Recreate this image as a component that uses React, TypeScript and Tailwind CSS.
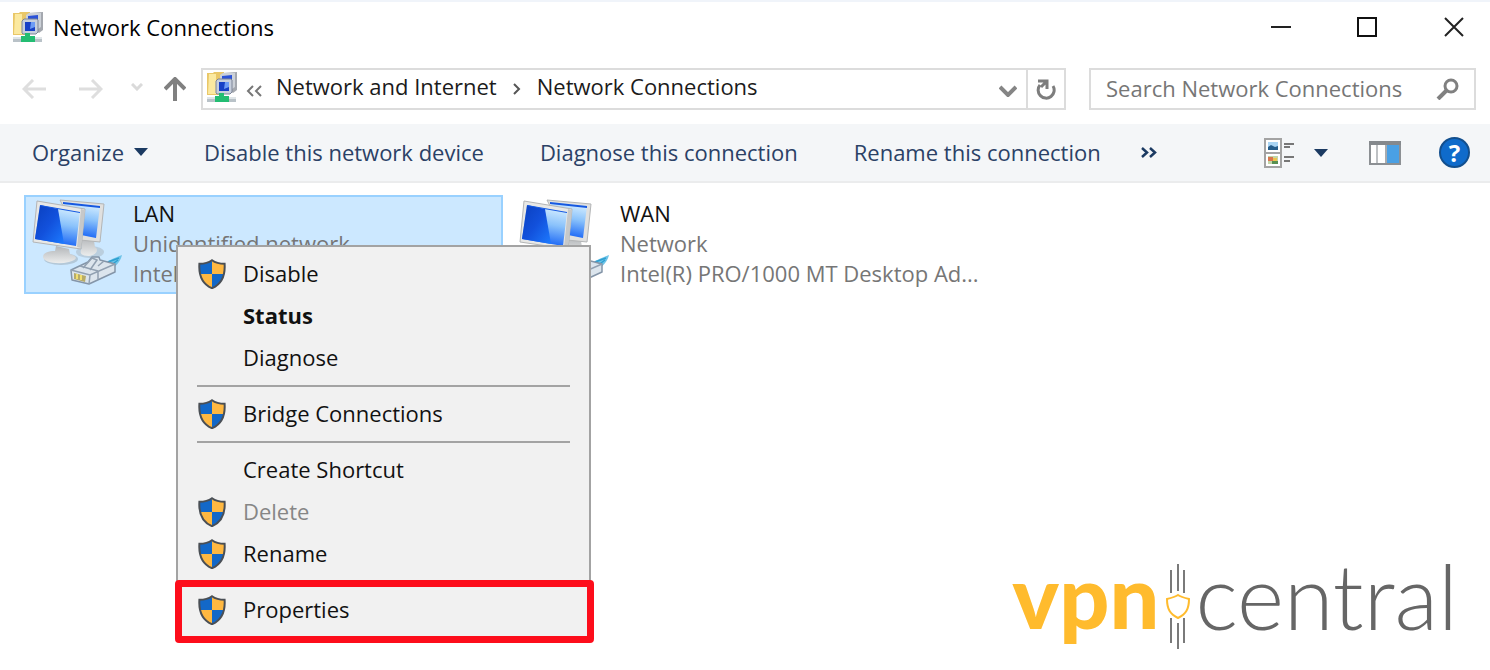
import type { ReactNode } from 'react';

const menuGroups = [
    [
        { label: 'Disable', shield: true },
        { label: 'Status', bold: true },
        { label: 'Diagnose' },
    ],
    [{ label: 'Bridge Connections', shield: true }],
    [
        { label: 'Create Shortcut' },
        { label: 'Delete', shield: true, disabled: true },
        { label: 'Rename', shield: true },
    ],
    [{ label: 'Properties', shield: true, highlighted: true }],
] as { label: string; shield?: boolean; bold?: boolean; disabled?: boolean; highlighted?: boolean }[][];

const connections = [
    { id: 'lan', name: 'LAN', status: 'Unidentified network', device: 'Intel(R) PRO/1000 MT Desktop Ad...', selected: true },
    { id: 'wan', name: 'WAN', status: 'Network', device: 'Intel(R) PRO/1000 MT Desktop Ad...', selected: false },
];

function FolderIcon() {
    return (
        <svg viewBox="0 0 31 31" className="h-[31px] w-[31px] shrink-0" aria-hidden="true">
            <path d="M0 1h6l1-1h10v23H0z" fill="#e9c768" />
            <path d="M2 2h7v20H1z" fill="#fbe9a0" />
            <path d="M15 1l15-1v18l-4 3-3-2z" fill="#a4a8af" />
            <path d="M13 3l3-2h12v14l-3 2-2-9H13z" fill="#ccd1d8" />
            <path d="M15 4l10-1v12h-1V8h-9z" fill="#2b52d8" />
            <path d="M9 9l2-2h13l1 1v12l-2 2H10l-1-1z" fill="#c7cfdd" stroke="#7d8597" />
            <path d="M12 10h10v9H12z" fill="#1740c6" />
            <path d="M18 10h4v5l-5 2z" fill="#6e9cf5" />
            <path d="M0 25h29v5H0z" fill="#b9c2c8" />
            <path d="M0 25h29v2H0z" fill="#dfe5e8" />
            <path d="M12 21h5v3h5v6H8v-6h4z" fill="#23bd72" />
        </svg>
    );
}

function ShieldIcon() {
    return (
        <svg viewBox="0 0 28 30" className="h-[30px] w-7" aria-hidden="true">
            <path d="M14 2v13H2C1 11 1 8 1 5c5 0 9-1 13-3z" fill="#1368c8" />
            <path d="M14 2v13h12c1-4 1-7 1-10-5 0-9-1-13-3z" fill="#ffb841" />
            <path d="M14 15v14C8 26 3 21 2 15z" fill="#ffb841" />
            <path d="M14 15v14c6-3 11-8 12-14z" fill="#1368c8" />
            <path d="M14 1.2c3 2.200 8 3.600 12.600 3.600C27.400 17 24 25 14 29.200 4 25 .6 17 1.400 4.800 6 4.800 11 3.400 14 1.200z" fill="none" stroke="#4a4f55" strokeWidth="2" />
        </svg>
    );
}

function ConnectionIcon({ id }: { id: string }) {
    return (
        <svg viewBox="0 0 92 92" className="h-[92px] w-[92px] shrink-0" aria-hidden="true">
            <defs>
                <linearGradient id={`${id}-dark`} x1="0" y1="0" x2="1" y2="1">
                    <stop offset="0" stopColor="#0a3fbe" />
                    <stop offset="0.5" stopColor="#1251dc" />
                    <stop offset="1" stopColor="#1d7bff" />
                </linearGradient>
                <linearGradient id={`${id}-light`} x1="0.600" y1="0" x2="0.400" y2="1">
                    <stop offset="0" stopColor="#d9f0ff" />
                    <stop offset="0.450" stopColor="#8ac2fb" />
                    <stop offset="1" stopColor="#0e5cf5" />
                </linearGradient>
                <linearGradient id={`${id}-base`} x1="0" y1="0" x2="0" y2="1">
                    <stop offset="0" stopColor="#b2b5b8" />
                    <stop offset="1" stopColor="#eceded" />
                </linearGradient>
            </defs>
            <ellipse cx="58" cy="54" rx="14" ry="6" fill="#a7b3bd" opacity="0.500" />
            <path d="M50 39l12 4 1 6c4 2 2 8-6 9-8 0-10-3-7-8z" fill={`url(#${id}-base)`} />
            <path d="M28 2l44 4-4 38-20-2z" fill="#e0e0df" stroke="#b3b5b6" strokeWidth="1" />
            <path d="M31 4l37 4-4 32-15-3z" fill={`url(#${id}-light)`} />
            <path d="M31 4l37 4v2L31 6z" fill="#1658e0" />
            <ellipse cx="29" cy="61" rx="17" ry="6" fill="#9aa7b2" opacity="0.500" />
            <path d="M24 48l13 3 1 5c8 2 8 6-1 8-12 3-26 0-26-5 0-4 5-6 12-6z" fill={`url(#${id}-base)`} />
            <path d="M5 3l48 8-4 40L1 44z" fill="#e8e8e6" stroke="#b3b5b6" strokeWidth="1" />
            <path d="M49 11l4 1-4 38-4-1z" fill="#c6c8c9" />
            <path d="M8 7l40 7-4 34-41-7z" fill={`url(#${id}-light)`} />
            <path d="M8 7l18 4 6 35-29-5z" fill={`url(#${id}-dark)`} />
            <path d="M8 7l40 7v1L8 8z" fill="#1658e0" />
            <path d="M70 65c6-1 11-5 20-8-1 5-4 9-10 14z" fill="#6fc4e8" />
            <path d="M76 64l11-4M78 68l8-6" stroke="#2d9fd0" strokeWidth="1.500" />
            <path d="M39 72l17-8 4-5h7l1 3 15 4v8L57 86l-17-4z" fill="#dce5ed" stroke="#8495a8" strokeWidth="1.500" strokeLinejoin="round" />
            <path d="M39 72l19 5 25-11M58 77l-1 9M51 70l9-10 5 2-7 10M48 68l18 5M66 73v8M72 63l-6 5" fill="none" stroke="#91a0b1" strokeWidth="1.500" />
            <path d="M42 75l12 3-1 6-11-3z" fill="#b7ab68" />
            <path d="M45 76v5M49 77v5" stroke="#f1df70" strokeWidth="2" />
        </svg>
    );
}

function Caret() {
    return (
        <svg viewBox="0 0 14 8" className="h-2 w-[14px]" aria-hidden="true">
            <path d="M0 0h14L7 8z" fill="#1b3a62" />
        </svg>
    );
}

function IconButton({ label, className = '', children }: { label: string; className?: string; children: ReactNode }) {
    return (
        <button type="button" aria-label={label} className={`flex shrink-0 items-center justify-center ${className}`}>
            {children}
        </button>
    );
}

function TitleBar() {
    return (
        <header className="flex h-[52px] items-center border-t-2 border-[#f0f4fa] pl-[13px]">
            <FolderIcon />
            <h1 className="ml-[9px] flex-1 text-black">Network Connections</h1>
            <IconButton label="Minimize" className="h-10 w-[87px]">
                <svg viewBox="0 0 20 20" className="size-5"><path d="M0 10h20" stroke="#222" strokeWidth="2" /></svg>
            </IconButton>
            <IconButton label="Maximize" className="h-10 w-[86px]">
                <svg viewBox="0 0 20 20" className="size-5"><path d="M1 1h18v18H1z" fill="none" stroke="#111" strokeWidth="2" /></svg>
            </IconButton>
            <IconButton label="Close" className="h-10 w-20 pl-2">
                <svg viewBox="0 0 20 20" className="size-5"><path d="M1 1l18 18M19 1L1 19" stroke="#222" strokeWidth="2" /></svg>
            </IconButton>
        </header>
    );
}

function AddressRow() {
    return (
        <div className="mt-4 flex h-[42px] items-center pr-[14px] pl-[22px]">
            <nav aria-label="History" className="flex items-center">
                <IconButton label="Back" className="w-6">
                    <svg viewBox="0 0 24 20" className="h-5 w-6"><path d="M24 10H2M11 1l-9 9 9 9" fill="none" stroke="#dedede" strokeWidth="3" /></svg>
                </IconButton>
                <IconButton label="Forward" className="ml-[33px] w-6">
                    <svg viewBox="0 0 24 20" className="h-5 w-6"><path d="M0 10h22M13 1l9 9-9 9" fill="none" stroke="#dedede" strokeWidth="3" /></svg>
                </IconButton>
                <IconButton label="Recent locations" className="ml-7 w-3">
                    <svg viewBox="0 0 12 8" className="mb-1 h-2 w-3"><path d="M1 1l5 5 5-5" fill="none" stroke="#dadada" strokeWidth="3" /></svg>
                </IconButton>
                <IconButton label="Up" className="ml-[21px] w-[22px]">
                    <svg viewBox="0 0 22 24" className="h-6 w-[22px]"><path d="M11 24V3M1 12L11 2l10 10" fill="none" stroke="#808080" strokeWidth="4" /></svg>
                </IconButton>
            </nav>
            <div className="ml-[15px] flex h-full min-w-0 flex-1 items-center border-2 border-[#dcdcdc] pl-1">
                <span className="pb-1"><FolderIcon /></span>
                <svg viewBox="0 0 16 12" className="mt-1 ml-2 h-3 w-4 shrink-0" aria-hidden="true"><path d="M7 1L2 6l5 5M15 1l-5 5 5 5" fill="none" stroke="#777" strokeWidth="2" /></svg>
                <a href="#network-and-internet" className="ml-[14px] pb-[6px] whitespace-nowrap">Network and Internet</a>
                <svg viewBox="0 0 8 12" className="ml-4 h-3 w-2 shrink-0" aria-hidden="true"><path d="M1 1l5 5-5 5" fill="none" stroke="#555" strokeWidth="2" /></svg>
                <a href="#network-connections" className="ml-4 pb-[6px] whitespace-nowrap">Network Connections</a>
                <IconButton label="Previous locations" className="mr-2 ml-auto w-5">
                    <svg viewBox="0 0 18 12" className="mt-1 h-3 w-[18px]"><path d="M1 2l8 8 8-8" fill="none" stroke="#858585" strokeWidth="4" /></svg>
                </IconButton>
                <IconButton label="Refresh" className="h-full w-[38px] border-l-2 border-[#dcdcdc]">
                    <svg viewBox="0 0 20 22" className="mt-[2px] h-[22px] w-5">
                        <path d="M4 6a8 8 0 1 0 13 1" fill="none" stroke="#7d7d7d" strokeWidth="3" />
                        <path d="M2 2h9v8M11 2L5 8" fill="none" stroke="#7d7d7d" strokeWidth="3" />
                    </svg>
                </IconButton>
            </div>
            <form role="search" className="ml-[23px] flex h-full w-[387px] items-center border-2 border-[#dcdcdc] pr-[14px] pl-[15px]">
                <input type="search" aria-label="Search Network Connections" placeholder="Search Network Connections" className="min-w-0 flex-1 pb-[2px] outline-none placeholder:text-[#767676]" />
                <IconButton label="Search">
                    <svg viewBox="0 0 24 22" className="h-[22px] w-6"><circle cx="15" cy="8" r="6" fill="none" stroke="#808080" strokeWidth="3" /><path d="M11 12l-9 9" stroke="#808080" strokeWidth="4" /></svg>
                </IconButton>
            </form>
        </div>
    );
}

function Toolbar() {
    return (
        <div role="toolbar" aria-label="Commands" className="mt-[14px] flex h-[59px] items-center border-b-2 border-[#ebeced] bg-[#f4f6f8] pr-5 pl-8 whitespace-nowrap text-[#2b4166]">
            <button type="button" className="flex items-center gap-[10px] pb-[2px]">Organize <Caret /></button>
            <button type="button" className="ml-14 pb-[2px]">Disable this network device</button>
            <button type="button" className="ml-14 pb-[2px]">Diagnose this connection</button>
            <button type="button" className="ml-14 pb-[2px]">Rename this connection</button>
            <IconButton label="More commands" className="ml-10">
                <svg viewBox="0 0 16 11" className="h-[11px] w-4"><path d="M1 1l5 4.500L1 10M9 1l5 4.500L9 10" fill="none" stroke="#1b3a62" strokeWidth="2.500" /></svg>
            </IconButton>
            <IconButton label="Change view" className="ml-auto">
                <svg viewBox="0 0 30 30" className="h-[30px] w-[30px]">
                    <path d="M1 1h16v28H1zM1 15h16" fill="#fff" stroke="#a3a3a3" strokeWidth="2" />
                    <path d="M4 4h10v8H4z" fill="#a9d5f5" />
                    <path d="M4 9l3-2 4 2 3-1v4H4z" fill="#245d8c" />
                    <path d="M4 18h10v8H4z" fill="#c4d5a7" />
                    <path d="M4 19h5v4H4z" fill="#d9754d" />
                    <path d="M9 20h4v4H9z" fill="#edc34c" />
                    <path d="M8 23h6v3H8z" fill="#579052" />
                    <path d="M20 6h10M20 9h6M20 19h10M20 23h6" stroke="#777" strokeWidth="2" />
                </svg>
            </IconButton>
            <IconButton label="View options" className="ml-5"><Caret /></IconButton>
            <IconButton label="Preview pane" className="ml-[41px]">
                <svg viewBox="0 0 32 24" className="h-6 w-8">
                    <path d="M1 1h30v22H1z" fill="#fff" stroke="#8c9094" strokeWidth="2" />
                    <path d="M0 0h32v4H0z" fill="#85898d" />
                    <path d="M8 4v18" stroke="#a8acb0" strokeWidth="1.500" />
                    <path d="M18 4h12v18H18z" fill="#4aa0e4" />
                    <path d="M17 4v18" stroke="#a8acb0" strokeWidth="2" />
                </svg>
            </IconButton>
            <IconButton label="Help" className="ml-[38px] size-[31px] rounded-full border-2 border-[#124f8e] bg-[#0f6bcb]">
                <span className="text-2xl leading-6 font-bold text-white">?</span>
            </IconButton>
        </div>
    );
}

function ContextMenu() {
    return (
        <div role="menu" aria-label="LAN" className="absolute top-[62px] left-[176px] w-[415px] border-2 border-[#a3a3a3] bg-[#f1f1f1] pt-[6px] pb-2 text-[#111]">
            {menuGroups.map((group, i) => (
                <div key={group[0].label} role="group">
                    {i > 0 && <hr className="mx-[19px] my-[6px] border-t-2 border-[#a3a3a3]" />}
                    {group.map((item) => (
                        <button
                            key={item.label}
                            type="button"
                            role="menuitem"
                            disabled={item.disabled}
                            className={`relative flex h-[42px] w-full items-center pb-[2px] pl-5 ${item.bold ? 'font-bold' : ''} ${item.disabled ? 'text-[#868686]' : ''}`}
                        >
                            <span className="mr-[17px] w-7 pt-[2px]">{item.shield && <ShieldIcon />}</span>
                            {item.label}
                            {item.highlighted && <span className="absolute -top-[9px] -right-[5px] -bottom-3 -left-[3px] rounded-sm border-7 border-[#fd0d1b]" />}
                        </button>
                    ))}
                </div>
            ))}
        </div>
    );
}

function Logo() {
    return (
        <footer className="mt-auto flex items-center justify-end pr-8 pb-2 font-[Lato,sans-serif] text-[88px] leading-[86px]">
            <span className="pb-6 font-black text-[#ffbb2d]">vpn</span>
            <svg viewBox="0 0 26 86" className="mr-1 ml-[6px] h-[86px] w-[26px]" aria-hidden="true">
                <path d="M6 6v23M13 0v27M19 6v23M6 54v25M13 59v26M19 54v25" stroke="#7a7a7a" strokeWidth="2" />
                <path d="M13 31c3 2 7 3 11 4 0 10-3 15-11 19C5 50 2 45 2 35c4-1 8-2 11-4z" fill="#fff" stroke="#ffbb2d" strokeWidth="2" />
            </svg>
            <span className="pb-6 text-[90px] font-light text-[#666]">central</span>
        </footer>
    );
}

export default function App() {
    return (
        <div className="flex min-h-screen flex-col bg-white font-['Open_Sans','Noto_Sans',sans-serif] text-[22px] leading-[30px] text-[#1b1b1b]">
            <TitleBar />
            <AddressRow />
            <Toolbar />
            <main className="relative flex flex-1 flex-col">
                <ul className="flex gap-2 px-6 pt-3">
                    {connections.map((item) => (
                        <li
                            key={item.id}
                            className={`flex h-[99px] w-[479px] items-start border-2 pt-px pl-[6px] ${item.selected ? 'border-[#99d1ff] bg-[#cce8ff]' : 'border-transparent'}`}
                        >
                            <ConnectionIcon id={item.id} />
                            <div className="ml-[9px] min-w-0 whitespace-nowrap text-[#767676]">
                                <h2 className="text-[#111]">{item.name}</h2>
                                <p>{item.status}</p>
                                <p>{item.device}</p>
                            </div>
                        </li>
                    ))}
                </ul>
                <ContextMenu />
                <Logo />
            </main>
        </div>
    );
}
